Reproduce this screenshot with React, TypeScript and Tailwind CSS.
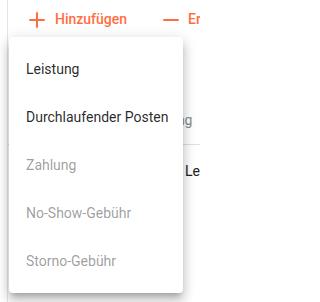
import { Plus, Minus } from "lucide-react";

const items = [
  { label: "Leistung", disabled: false },
  { label: "Durchlaufender Posten", disabled: false },
  { label: "Zahlung", disabled: true },
  { label: "No-Show-Gebühr", disabled: true },
  { label: "Storno-Gebühr", disabled: true },
];

export default function App() {
  return (
    <div
      className="relative h-[302px] w-[200px] overflow-hidden bg-white"
      style={{ fontFamily: "Roboto, 'Liberation Sans', sans-serif" }}
    >
      <div className="ml-[7px] h-full border-l border-[#e6e6e6]">
        {/* toolbar */}
        <div className="flex h-[39px] items-center pl-[17px] text-[14px] font-medium text-[#ff6e40]">
          <button className="flex items-center gap-[6px]">
            <Plus className="h-[24px] w-[24px]" strokeWidth={2} />
            <span>Hinzufügen</span>
          </button>
          <button className="ml-[32px] flex items-center gap-[5px] whitespace-nowrap">
            <Minus className="h-[24px] w-[24px]" strokeWidth={2} />
            <span>Er</span>
          </button>
        </div>

        {/* table behind the menu */}
        <div className="text-[14px]">
          <div className="flex h-[105px] items-end whitespace-nowrap pb-[13px] pl-[131px] text-[#8a8a8a]">
            Leistung
          </div>
          <div className="border-t border-[#e0e0e0] pl-[177px]">
            <div className="flex h-[52px] items-center whitespace-nowrap text-[#212121]">Le</div>
          </div>
        </div>
      </div>

      {/* dropdown menu */}
      <div className="absolute left-[9px] top-[37px] w-[174px] rounded-[4px] bg-white py-[8px] shadow-[0_5px_5px_-3px_rgba(0,0,0,0.2),0_8px_10px_1px_rgba(0,0,0,0.14),0_3px_14px_2px_rgba(0,0,0,0.12)]">
        {items.map((item) => (
          <div
            key={item.label}
            className={
              "flex h-[48px] items-center whitespace-nowrap px-[17px] text-[14px] " +
              (item.disabled ? "text-black/40" : "text-black/85")
            }
          >
            {item.label}
          </div>
        ))}
      </div>
    </div>
  );
}
